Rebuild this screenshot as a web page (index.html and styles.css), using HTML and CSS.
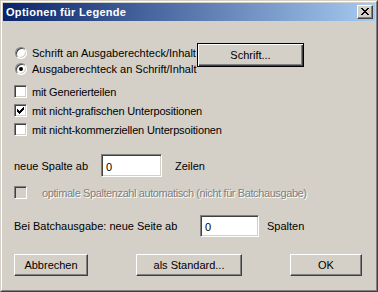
FILE: index.html
```html
<!DOCTYPE html>
<html lang="de">
<head>
<meta charset="UTF-8">
<title>Optionen für Legende</title>
<link rel="stylesheet" href="styles.css">
</head>
<body>
<div class="window">
  <div class="frame">
    <div class="titlebar">
      <span class="title">Optionen für Legende</span>
      <span class="close">
        <svg width="8" height="7" viewBox="0 0 8 7">
          <path d="M0 0h2v1h1v1h2v-1h1v-1h2v1h-1v1h-1v1h-1v1h1v1h1v1h1v1h-2v-1h-1v-1h-2v1h-1v1h-2v-1h1v-1h1v-1h1v-1h-1v-1h-1v-1h-1z" fill="#000"/>
        </svg>
      </span>
    </div>

    <div class="content">
      <div class="top-section">
        <div class="radios">
          <div class="opt"><span class="radio"></span>Schrift an Ausgaberechteck/Inhalt</div>
          <div class="opt"><span class="radio on"></span>Ausgaberechteck an Schrift/Inhalt</div>
        </div>
        <div class="btn default font-btn">Schrift...</div>
      </div>

      <div class="checks">
        <div class="opt check-row"><span class="check"></span>mit Generierteilen</div>
        <div class="opt check-row"><span class="check"><svg width="7" height="7" viewBox="0 0 7 7"><path d="M0 2h1v1h1v1h1v-1h1v-1h1v-1h1v-1h1v3h-1v1h-1v1h-1v1h-1v1h-1v-1h-1v-1h-1z" fill="#000"/></svg></span>mit nicht-grafischen Unterpositionen</div>
        <div class="opt check-row"><span class="check"></span>mit nicht-kommerziellen Unterpsoitionen</div>
      </div>

      <div class="field-row row-cols">
        <span class="label cols-label">neue Spalte ab</span>
        <span class="edit cols-edit">0</span>
        <span class="unit">Zeilen</span>
      </div>

      <div class="opt check-row disabled">
        <span class="check off"></span>optimale Spaltenzahl automatisch (nicht für Batchausgabe)
      </div>

      <div class="field-row row-batch">
        <span class="label batch-label">Bei Batchausgabe: neue Seite ab</span>
        <span class="edit batch-edit">0</span>
        <span class="unit">Spalten</span>
      </div>

      <div class="buttons">
        <div class="btn btn-cancel">Abbrechen</div>
        <div class="btn btn-std">als Standard...</div>
        <div class="btn btn-ok">OK</div>
      </div>
    </div>
  </div>
</div>
</body>
</html>
```

FILE: styles.css
```css
body {
    margin: 0;
    background: #d4d0c8;
    font-family: "Liberation Sans", Arial, sans-serif;
    font-size: 11px;
    color: #000;
}

/* Fensterrahmen */
.window {
    width: 378px;
    height: 292px;
    box-sizing: border-box;
    border: 1px solid;
    border-color: #d4d0c8 #404040 #404040 #d4d0c8;
    background: #d4d0c8;
}
.frame {
    height: 100%;
    box-sizing: border-box;
    border: 1px solid;
    border-color: #fff #808080 #808080 #fff;
    padding: 1px;
}

/* Titelleiste */
.titlebar {
    height: 18px;
    display: flex;
    align-items: center;
    justify-content: space-between;
    padding: 0 2px 0 3px;
    background: linear-gradient(to right, #0a246a, #a6caf0);
}
.title {
    color: #fff;
    font-weight: bold;
    font-size: 11px;
    letter-spacing: 0.3px;
}
.close {
    width: 16px;
    height: 14px;
    box-sizing: border-box;
    display: flex;
    align-items: center;
    justify-content: center;
    background: #d4d0c8;
    border: 1px solid;
    border-color: #fff #404040 #404040 #fff;
    box-shadow: inset -1px -1px #808080;
    padding-bottom: 1px;
}

/* Inhalt */
.content {
    padding: 23px 13px 0 11px;
}
.top-section {
    display: flex;
    align-items: flex-start;
}
.radios {
    width: 183px;
    padding-top: 1px;
}
.opt {
    display: flex;
    align-items: center;
    height: 16px;
    white-space: nowrap;
}
.radio {
    width: 12px;
    height: 12px;
    box-sizing: border-box;
    margin: 0 5px 0 1px;
    border-radius: 50%;
    border: 1px solid;
    border-color: #808080 #fff #fff #808080;
    background: #fff;
    box-shadow: inset 1px 1px #404040, inset -1px -1px #d4d0c8;
    position: relative;
}
.radio.on::after {
    content: "";
    position: absolute;
    left: 3px;
    top: 3px;
    width: 4px;
    height: 4px;
    border-radius: 50%;
    background: #000;
}

/* Schaltflächen */
.btn {
    box-sizing: border-box;
    display: flex;
    align-items: center;
    justify-content: center;
    height: 22px;
    background: #d4d0c8;
    border: 1px solid;
    border-color: #fff #404040 #404040 #fff;
    box-shadow: inset -1px -1px #808080;
}
.btn.default {
    border: 1px solid #000;
    box-shadow: inset 1px 1px #fff, inset -1px -1px #404040, inset -2px -2px #808080;
}
.font-btn {
    width: 107px;
    height: 24px;
    margin-top: -1px;
}

/* Kontrollkästchen */
.checks {
    margin-top: 5px;
}
.check-row {
    height: 19px;
    letter-spacing: -0.15px;
}
.check {
    width: 13px;
    height: 13px;
    box-sizing: border-box;
    margin-right: 5px;
    display: flex;
    align-items: center;
    justify-content: center;
    border: 1px solid;
    border-color: #808080 #fff #fff #808080;
    background: #fff;
    box-shadow: inset 1px 1px #404040, inset -1px -1px #d4d0c8;
}
.check.off {
    background: #d4d0c8;
    margin-right: 15px;
}
.disabled {
    margin-top: 6px;
    color: #808080;
    text-shadow: 1px 1px #fff;
    letter-spacing: -0.4px;
}

/* Eingabezeilen */
.field-row {
    display: flex;
    align-items: center;
    height: 23px;
    white-space: nowrap;
}
.row-cols {
    margin-top: 15px;
}
.row-batch {
    margin-top: 12px;
}
.edit {
    box-sizing: border-box;
    height: 23px;
    padding: 2px 0 0 4px;
    display: flex;
    align-items: center;
    background: #fff;
    border: 1px solid;
    border-color: #808080 #fff #fff #808080;
    box-shadow: inset 1px 1px #404040, inset -1px -1px #d4d0c8;
}
.cols-label {
    width: 87px;
}
.cols-edit {
    width: 61px;
    margin-right: 13px;
}
.batch-label {
    width: 186px;
}
.batch-edit {
    width: 59px;
    height: 22px;
    margin-right: 8px;
}

/* untere Knopfleiste */
.buttons {
    margin-top: 17px;
    display: flex;
    justify-content: space-between;
}
.btn-cancel {
    width: 74px;
}
.btn-std {
    width: 106px;
}
.btn-ok {
    width: 72px;
}
```
